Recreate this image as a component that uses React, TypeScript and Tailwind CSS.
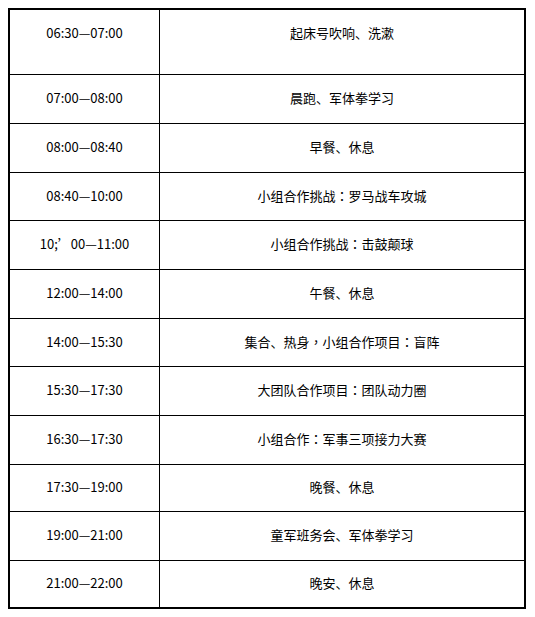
import React from "react";

type Row = { time: string; activity: string; h: string; top?: boolean };

const ROWS: Row[] = [
  { time: "06:30—07:00", activity: "起床号吹响、洗漱", h: "h-[64px]", top: true },
  { time: "07:00—08:00", activity: "晨跑、军体拳学习", h: "h-[49px]" },
  { time: "08:00—08:40", activity: "早餐、休息", h: "h-[49px]" },
  { time: "08:40—10:00", activity: "小组合作挑战：罗马战车攻城", h: "h-[48px]" },
  { time: "10;’00—11:00", activity: "小组合作挑战：击鼓颠球", h: "h-[49px]" },
  { time: "12:00—14:00", activity: "午餐、休息", h: "h-[49px]" },
  { time: "14:00—15:30", activity: "集合、热身，小组合作项目：盲阵", h: "h-[48px]" },
  { time: "15:30—17:30", activity: "大团队合作项目：团队动力圈", h: "h-[49px]" },
  { time: "16:30—17:30", activity: "小组合作：军事三项接力大赛", h: "h-[49px]" },
  { time: "17:30—19:00", activity: "晚餐、休息", h: "h-[47px]" },
  { time: "19:00—21:00", activity: "童军班务会、军体拳学习", h: "h-[49px]" },
  { time: "21:00—22:00", activity: "晚安、休息", h: "h-[47px]" },
];

// centred fullwidth colon / comma, as in the original table
function Activity({ text }: { text: string }) {
  const parts = text.split(/([：，])/);
  return (
    <>
      {parts.map((p, i) =>
        p === "：" || p === "，" ? (
          <span key={i} className="font-['Noto_Sans_CJK_TC',sans-serif]">
            {p}
          </span>
        ) : (
          <React.Fragment key={i}>{p}</React.Fragment>
        )
      )}
    </>
  );
}

export default function App() {
  return (
    <div className="min-h-screen bg-white pt-[8px] pl-[8px] text-[13px] text-black font-['Noto_Sans_CJK_SC',sans-serif]">
      <div className="w-[518px] border-2 border-black flex flex-col">
        {ROWS.map((r, i) => (
          <div
            key={i}
            className={`flex ${r.h} ${i > 0 ? "border-t border-black" : ""}`}
          >
            <div
              className={`w-[149px] flex justify-center ${r.top ? "items-start pt-[13px]" : "items-center pb-[2px]"}`}
            >
              {r.time}
            </div>
            <div
              className={`flex-1 border-l border-black flex justify-center ${r.top ? "items-start pt-[13px]" : "items-center pb-[2px]"}`}
            >
              <Activity text={r.activity} />
            </div>
          </div>
        ))}
      </div>
    </div>
  );
}
